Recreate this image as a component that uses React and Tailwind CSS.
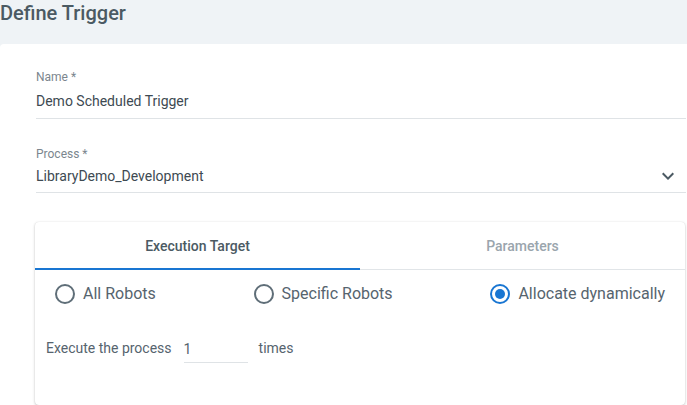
import {useState} from 'react';

const Radio = ({checked, label, onClick}) => (
  <button type="button" onClick={onClick} className="flex items-center gap-[8px] h-[20px]">
    <span
      className={
        'w-[20px] h-[20px] rounded-full border-2 flex items-center justify-center ' +
        (checked ? 'border-[#1976d2]' : 'border-[#5f6e78]')
      }>
      {checked && <span className="w-[10px] h-[10px] rounded-full bg-[#1976d2]" />}
    </span>
    <span className="text-[16px] leading-5 text-[#56646e]">{label}</span>
  </button>
);

const App = () => {
  const [tab, setTab] = useState('target');
  const [target, setTarget] = useState('dynamic');
  const [times, setTimes] = useState('1');

  return (
    <div
      className="w-[687px] h-[405px] overflow-hidden bg-[#eff3f6] flex flex-col"
      style={{fontFamily: 'Roboto, "Noto Sans", sans-serif'}}>
      <div className="h-[44px] shrink-0 pt-[1px]">
        <h1 className="text-[20px] leading-6 font-medium text-[#4b5a63]">Define Trigger</h1>
      </div>

      <div className="flex-1 bg-white rounded-tl-[4px] pl-[36px] pr-[1px] pt-[25px]">
        <div className="border-b border-[#dfe3e6]">
          <label className="block text-[12px] leading-4 text-[#7b868e]">Name *</label>
          <div className="pt-[6px] pb-[7px] text-[14px] leading-5 text-[#3e4a52]">
            Demo Scheduled Trigger
          </div>
        </div>

        <div className="mt-[27px] border-b border-[#dfe3e6]">
          <label className="block text-[12px] leading-4 text-[#7b868e]">Process *</label>
          <div className="pt-[4px] pb-[6px] flex items-center justify-between text-[14px] leading-5 text-[#3e4a52]">
            <span>LibraryDemo_Development</span>
            <svg width="24" height="24" viewBox="0 0 24 24" className="mr-[6px] -my-[2px]" fill="#4b5a63">
              <path d="M16.59 8.59L12 13.17 7.41 8.59 6 10l6 6 6-6z" />
            </svg>
          </div>
        </div>

        <div className="mt-[29px] -ml-px mr-[1px] h-[183px] rounded-[4px] bg-white shadow-[0_1px_3px_rgba(0,0,0,0.22),0_0_1px_rgba(0,0,0,0.12)]">
          <div className="flex border-b border-[#e1e5e8]">
            <button
              type="button"
              onClick={() => setTab('target')}
              className={
                'flex-1 h-[48px] pt-[2px] text-[14px] font-medium border-b-2 -mb-px ' +
                (tab === 'target' ? 'text-[#4b5a63] border-[#1976d2]' : 'text-[#9aa5ad] border-transparent')
              }>
              Execution Target
            </button>
            <button
              type="button"
              onClick={() => setTab('params')}
              className={
                'flex-1 h-[48px] pt-[2px] text-[14px] font-medium border-b-2 -mb-px ' +
                (tab === 'params' ? 'text-[#4b5a63] border-[#1976d2]' : 'text-[#9aa5ad] border-transparent')
              }>
              Parameters
            </button>
          </div>

          <div className="flex justify-between px-[20px] pt-[14px]">
            <Radio checked={target === 'all'} label="All Robots" onClick={() => setTarget('all')} />
            <Radio checked={target === 'specific'} label="Specific Robots" onClick={() => setTarget('specific')} />
            <Radio checked={target === 'dynamic'} label="Allocate dynamically" onClick={() => setTarget('dynamic')} />
          </div>

          <div className="flex items-center pl-[11px] mt-[30px] text-[14px] text-[#56646e]">
            <span>Execute the process</span>
            <input
              type="text"
              value={times}
              onChange={e => setTimes(e.target.value)}
              className="ml-[12px] w-[64px] h-[29px] pt-[2px] border-b border-[#dfe3e6] outline-none text-[14px] text-[#56646e]"
            />
            <span className="ml-[11px]">times</span>
          </div>
        </div>
      </div>
    </div>
  );
};

export default App;
